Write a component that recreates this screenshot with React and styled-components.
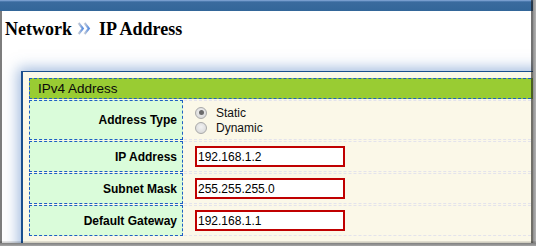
import React from 'react';
import styled, { createGlobalStyle } from 'styled-components';

const Global = createGlobalStyle`
  html, body { margin: 0; padding: 0; background: #fff; }
  body { width: 536px; height: 246px; overflow: hidden; }
`;

const Frame = styled.div`
  position: relative;
  width: 536px;
  height: 246px;
  overflow: hidden;
  background: #fff;
  font-family: "Liberation Sans", Arial, sans-serif;
`;

const TopBar = styled.div`
  height: 11px;
  background: linear-gradient(to bottom, #8fb0dc 0, #5f8abf 1px, #3a6b9e 2px, #336699 100%);
`;

const Body = styled.div`
  box-sizing: border-box;
  height: 235px;
  border-left: 2px solid #7d7d7d;
  padding: 8px 0 0 3px;
  overflow: hidden;
`;

const Title = styled.h1`
  margin: 0;
  font: bold 18px/20px "Liberation Serif", "Times New Roman", serif;
  color: #000;
  white-space: nowrap;
`;

const Crumb = styled.svg`
  display: inline-block;
  width: 14px;
  height: 13px;
  margin: 0 8px 0 5px;
  vertical-align: 0;
`;

const Panel = styled.section`
  margin: 32px -10px 0 16px;
  border-top: 1px solid #1b4f8e;
  border-left: 2px solid #1b4f8e;
  background: #fbf8e8;
  padding: 6px 0 20px 6px;
  box-shadow: 0 0 13px 3px rgba(70, 120, 190, 0.5);
`;

const Grid = styled.div`
  display: grid;
  grid-template-columns: 154px 1fr;
  gap: 1px;
`;

const Header = styled.div`
  grid-column: 1 / -1;
  box-sizing: border-box;
  height: 21px;
  border: 1px dashed #1f5fc4;
  background: #99cc33;
  padding-left: 8px;
  font-size: 13.5px;
  line-height: 19px;
  color: #0a0a0a;
`;

const Label = styled.div`
  box-sizing: border-box;
  height: ${p => (p.$tall ? 40 : 31)}px;
  border: 1px dashed #1f5fc4;
  background: #dafcda;
  display: flex;
  align-items: center;
  justify-content: flex-end;
  padding-right: 5px;
  font-weight: bold;
  font-size: 12px;
  color: #000;
`;

const Value = styled.div`
  box-sizing: border-box;
  height: ${p => (p.$tall ? 40 : 31)}px;
  border-top: 1px dashed #e3e3ec;
  border-bottom: 1px dashed #e3e3ec;
  display: flex;
  align-items: center;
  padding-left: 11px;
`;

const RadioGroup = styled.div`
  display: flex;
  flex-direction: column;
`;

const RadioLine = styled.label`
  display: flex;
  align-items: center;
  height: 15px;
  font-size: 12px;
  color: #111;
`;

const Radio = styled.span`
  position: relative;
  box-sizing: border-box;
  width: 12px;
  height: 12px;
  margin-right: 9px;
  border-radius: 50%;
  border: 1px solid #a9a9a9;
  background: radial-gradient(circle at 50% 40%, #f2f2f2, #d4d4d4);
  &::after {
    content: "";
    display: ${p => (p.$checked ? 'block' : 'none')};
    position: absolute;
    left: 2.5px;
    top: 2.5px;
    width: 5px;
    height: 5px;
    border-radius: 50%;
    background: #6a6a6a;
  }
`;

const Input = styled.input`
  box-sizing: border-box;
  width: 150px;
  height: 21px;
  border: 2px solid #c00000;
  padding: 0 0 0 1px;
  margin: 0;
  background: #fff;
  font: 12px "Liberation Sans", Arial, sans-serif;
  color: #000;
  outline: none;
`;

const RightShade = styled.div`
  position: absolute;
  top: 0;
  right: 0;
  bottom: 0;
  width: 5px;
  background: linear-gradient(to right, rgba(20, 20, 20, 0.6) 0, rgba(20, 20, 20, 0.6) 2px, #8e8e8e 2px, #b4b4b4 100%);
`;

const BottomShade = styled.div`
  position: absolute;
  left: 0;
  right: 0;
  bottom: 0;
  height: 5px;
  background: linear-gradient(to bottom, rgba(0, 0, 0, 0.08) 0, rgba(0, 0, 0, 0.2) 2px, #7e7e7e 2px, #a6a6a6 100%);
`;

const fields = [
  { label: 'IP Address', value: '192.168.1.2' },
  { label: 'Subnet Mask', value: '255.255.255.0' },
  { label: 'Default Gateway', value: '192.168.1.1' },
];

export default function App() {
  return (
    <Frame>
      <Global />
      <TopBar />
      <Body>
        <Title>
          Network
          <Crumb viewBox="0 0 14 13" aria-hidden="true">
            <defs>
              <linearGradient id="crumbGrad" x1="0" y1="0" x2="1" y2="0">
                <stop offset="0" stopColor="#c9ced8" />
                <stop offset="1" stopColor="#5b8fe0" />
              </linearGradient>
            </defs>
            <path d="M1.5 1 L5.8 6.5 L1.5 12" fill="none" stroke="url(#crumbGrad)" strokeWidth="2.2" />
            <path d="M7.5 1 L11.8 6.5 L7.5 12" fill="none" stroke="url(#crumbGrad)" strokeWidth="2.2" />
          </Crumb>
          IP Address
        </Title>
        <Panel>
          <Grid>
            <Header>IPv4 Address</Header>
            <Label $tall>Address Type</Label>
            <Value $tall>
              <RadioGroup>
                <RadioLine>
                  <Radio $checked />
                  Static
                </RadioLine>
                <RadioLine>
                  <Radio />
                  Dynamic
                </RadioLine>
              </RadioGroup>
            </Value>
            {fields.map(f => (
              <React.Fragment key={f.label}>
                <Label>{f.label}</Label>
                <Value>
                  <Input defaultValue={f.value} />
                </Value>
              </React.Fragment>
            ))}
          </Grid>
        </Panel>
      </Body>
      <RightShade />
      <BottomShade />
    </Frame>
  );
}
